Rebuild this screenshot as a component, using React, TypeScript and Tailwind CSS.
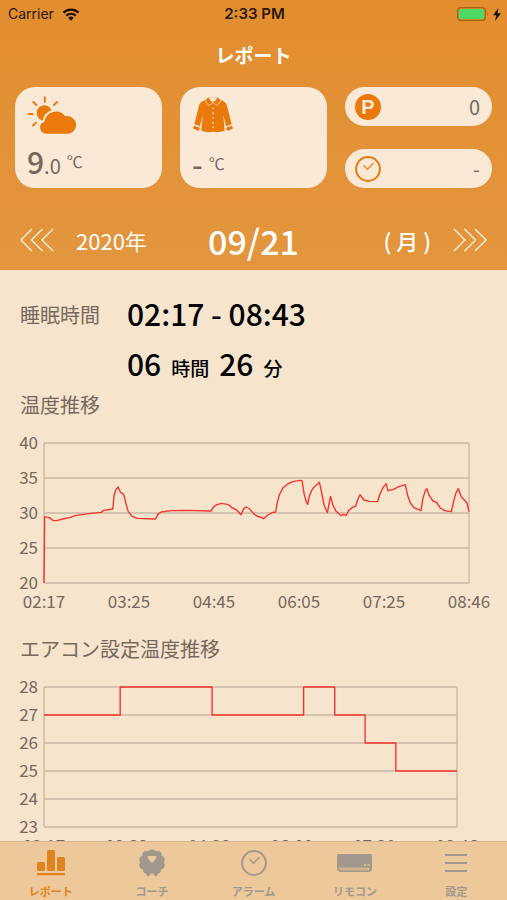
import type { ReactNode } from 'react';
import clsx from 'clsx';

const TEMPERATURE_POINTS =
  '0,420 2,221 16,224 28,233 38,233 56,228 76,224 96,217 136,212 171,208 179,202 206,198 210,157 216,139 222,132 229,148 239,154 246,184 252,205 264,220 280,226 334,228 341,214 351,207 381,203 426,202 500,204 508,192 518,185 532,181 553,185 563,194 577,201 590,215 599,196 606,192 616,198 628,212 637,219 650,223 658,227 670,216 685,208 694,207 698,182 705,155 715,136 727,125 745,116 768,112 773,113 779,152 785,175 790,184 794,162 802,142 810,131 825,118 832,150 839,187 849,209 853,187 858,160 866,188 875,205 890,218 897,214 905,217 913,202 923,194 934,189 939,171 947,155 958,171 975,175 999,176 1006,154 1015,134 1025,122 1030,143 1045,140 1065,130 1082,125 1090,160 1097,179 1108,194 1129,203 1135,167 1142,143 1147,137 1154,158 1165,174 1176,178 1187,195 1200,203 1220,206 1226,180 1233,152 1241,137 1250,161 1267,180 1273,206';

const AIRCON_POINTS =
  '0,84 228,84 228,0 503,0 503,84 777,84 777,0 870,0 870,84 961,84 961,168 1053,168 1053,252 1236,252';

// 天気アイコン
function WeatherIcon() {
  return (
    <svg viewBox="81 60 147 120" className="h-10 w-[49px]" aria-hidden>
      <g stroke="#ea7a0c" strokeWidth="6" strokeLinecap="round">
        <path d="M134.500 67v13M171 81l-9 9M100 81l9 9M86 117h12M99 152l9-9" />
      </g>
      <circle cx="133" cy="114" r="23" fill="#ea7a0c" />
      <path
        d="M139 176a18.500 18.500 0 0 1-6-36 35 35 0 0 1 63-16 26.500 26.500 0 1 1 2 52z"
        fill="#ea7a0c"
        stroke="#fbe9d7"
        strokeWidth="11"
        paintOrder="stroke"
      />
    </svg>
  );
}

// 服装アイコン
function ShirtIcon() {
  return (
    <svg viewBox="576 60 126 120" className="h-10 w-[42px]" aria-hidden>
      <path
        d="M618 74Q600 78 597 92L583 148L600 154L608 120L604 167Q622 174 639 170Q656 174 674 167L670 120L678 154L695 148L681 92Q678 78 660 74L639 84z"
        fill="#ea7a0c"
      />
      <path d="M582 152l18 6-3 9q-9 0-18-7zM696 152l-18 6 3 9q9 0 18-7z" fill="#ea7a0c" />
      <path
        d="M623 67h32l8 10-12 15-12-10-12 10-12-15z"
        fill="#ea7a0c"
        stroke="#fbe9d7"
        strokeWidth="2"
      />
      <path d="M627 68h24l-4 9-8 4-8-4z" fill="#fbe9d7" />
      <g fill="#fbe9d7">
        <circle cx="639" cy="100" r="2.500" />
        <circle cx="639" cy="115" r="2.500" />
        <circle cx="639" cy="129" r="2.500" />
        <circle cx="639" cy="143" r="2.500" />
        <circle cx="639" cy="157" r="2.500" />
      </g>
    </svg>
  );
}

function ClockIcon({ className, handClassName }: { className?: string; handClassName?: string }) {
  return (
    <svg viewBox="0 0 26 26" className={className} fill="none" stroke="currentColor" aria-hidden>
      <circle cx="13" cy="13" r="11.900" strokeWidth="2" />
      <path d="M8.700 9.300l3.800 4L18.500 7" strokeWidth="1.500" className={handClassName} />
    </svg>
  );
}

function TripleChevron({ direction }: { direction: 'left' | 'right' }) {
  return (
    <svg
      viewBox="0 0 34 24"
      className="h-6 w-[34px]"
      fill="none"
      stroke="#fff3e4"
      strokeWidth="1.300"
      aria-hidden
    >
      {direction === 'left' ? (
        <path d="M12 1L1 12l11 11M22.500 1l-11 11 11 11M33 1L22 12l11 11" />
      ) : (
        <path d="M1 1l11 11L1 23M11.500 1l11 11-11 11M22 1l11 11-11 11" />
      )}
    </svg>
  );
}

function StatusBar() {
  return (
    <div className="flex h-7 items-center pr-[6px] pl-2 font-['Inter',sans-serif] text-sm text-[#2a1706]">
      <div className="flex flex-1 items-center gap-2">
        <span>Carrier</span>
        <svg viewBox="0 0 18 13" className="h-[13px] w-[18px]" fill="none" aria-hidden>
          <path d="M1.500 4.700a10.700 10.700 0 0 1 15 0" stroke="#1c0f02" strokeWidth="2.400" />
          <path d="M4.300 7.700a6.700 6.700 0 0 1 9.400 0" stroke="#1c0f02" strokeWidth="2.200" />
          <path d="M9 12.700L6.300 9.900a3.900 3.900 0 0 1 5.400 0z" fill="#1c0f02" />
        </svg>
      </div>
      <span className="text-[15px] font-semibold">2:33 PM</span>
      <div className="flex flex-1 items-center justify-end gap-1">
        <svg viewBox="0 0 32 14" className="h-[14px] w-8" aria-hidden>
          <rect x="0.700" y="0.700" width="27.600" height="12.600" rx="3" fill="none" stroke="#a5631a" strokeWidth="1.300" />
          <rect x="2" y="2" width="25" height="10" rx="1.500" fill="#4cd964" />
          <path d="M30 4.500q1.700 2.500 0 5z" fill="#a5631a" />
        </svg>
        <svg viewBox="0 0 8 13" className="h-[13px] w-2" aria-hidden>
          <path d="M5.500 0L0 7.300h3.300L2 13l6-7.700H4.600z" fill="#1c0f02" />
        </svg>
      </div>
    </div>
  );
}

// 折れ線グラフ
function LineChart({
  yLabels,
  xLabels,
  points,
  width,
  className,
  title,
}: {
  yLabels: number[];
  xLabels: string[];
  points: string;
  width: number;
  className?: string;
  title: string;
}) {
  const step = 420 / (yLabels.length - 1);

  return (
    <div className={clsx('mt-[14px] text-[17px] text-[#75695d]', className)}>
      <div className="flex h-[156px] gap-[6px]">
        <div className="flex w-[38px] flex-col justify-between text-right leading-4">
          {yLabels.map((label) => (
            <span key={label}>{label}</span>
          ))}
        </div>
        <svg
          viewBox={`0 0 ${width} 420`}
          preserveAspectRatio="none"
          className="mt-[9px] h-[140px] min-w-0 flex-1 overflow-visible"
          fill="none"
          role="img"
          aria-label={title}
        >
          <g stroke="#cbb9a4" strokeWidth="1.400">
            {yLabels.map((label, i) => (
              <path key={label} d={`M0 ${i * step}H${width}`} vectorEffect="non-scaling-stroke" />
            ))}
            <path d={`M0 0V420M${width} 0V420`} vectorEffect="non-scaling-stroke" />
          </g>
          <polyline
            points={points}
            stroke="#f5362f"
            strokeWidth="1.400"
            strokeLinejoin="round"
            vectorEffect="non-scaling-stroke"
          />
        </svg>
      </div>
      {/* 目盛りの真下に中央揃えで並べる */}
      <div className="mt-px -mr-[25px] ml-[19px] flex justify-between leading-5">
        {xLabels.map((label) => (
          <span key={label} className="w-[50px] text-center">
            {label}
          </span>
        ))}
      </div>
    </div>
  );
}

function TabItem({ label, active, children }: { label: string; active?: boolean; children: ReactNode }) {
  return (
    <a
      href="#"
      aria-current={active ? 'page' : undefined}
      className={clsx(
        'flex flex-1 flex-col items-center pt-[7px] text-[11px] font-bold leading-4',
        active ? 'text-[#df8320]' : 'text-[#a2988e]'
      )}
    >
      <span className="mb-[6px] flex h-7 items-center">{children}</span>
      {label}
    </a>
  );
}

function TabBar() {
  return (
    <nav className="flex h-[59px] shrink-0 border-t border-[#d8b78d] bg-[#ecc89b]">
      <TabItem label="レポート" active>
        <svg viewBox="0 0 28 26" className="h-[26px] w-7" fill="currentColor" aria-hidden>
          <rect x="0" y="12" width="8" height="9" rx="1.500" />
          <rect x="10" y="0" width="8" height="21" rx="1.500" />
          <rect x="20" y="7" width="8" height="14" rx="1.500" />
          <rect x="0" y="23" width="28" height="2.300" rx="0.500" />
        </svg>
      </TabItem>
      <TabItem label="コーチ">
        <svg viewBox="0 0 26 28" className="h-7 w-[26px]" fill="currentColor" aria-hidden>
          <circle cx="13" cy="13" r="11.800" />
          <circle cx="13" cy="4" r="3.500" />
          <circle cx="7" cy="5.600" r="3.500" />
          <circle cx="19" cy="5.600" r="3.500" />
          <circle cx="3.800" cy="10.500" r="3.500" />
          <circle cx="22.200" cy="10.500" r="3.500" />
          <circle cx="3.800" cy="16.500" r="3.500" />
          <circle cx="22.200" cy="16.500" r="3.500" />
          <circle cx="7.500" cy="21" r="3.500" />
          <circle cx="18.500" cy="21" r="3.500" />
          <path d="M6.500 22h4.500v4.500q-2.500 1.500-3.500 0zM15 22h4.500l-1 4.500q-1 1.500-3.500 0z" />
          <path d="M8.300 7.300q4.700-1.200 9.400 0 .6 1-4.700 6.700-5.300-5.700-4.700-6.700z" fill="#ecc89b" />
        </svg>
      </TabItem>
      <TabItem label="アラーム">
        <ClockIcon className="size-[26px]" />
      </TabItem>
      <TabItem label="リモコン">
        <svg viewBox="0 0 35 18" className="h-[18px] w-[35px]" aria-hidden>
          <path d="M1.500 0h32Q35 0 35 1.500V14q0 4-4 4H4q-4 0-4-4V1.500Q0 0 1.500 0z" fill="currentColor" />
          <path d="M1 13.500h30.500v3H4.500Q2 16.500 1 13.500z" fill="#d0b08c" />
          <path d="M27 11h2M30.500 11h2M31.500 14v2" stroke="#ecc89b" strokeWidth="1.300" />
        </svg>
      </TabItem>
      <TabItem label="設定">
        <svg viewBox="0 0 22 20" className="h-5 w-[22px]" stroke="currentColor" strokeWidth="1.800" aria-hidden>
          <path d="M0 2h22M0 10h22M0 18h22" />
        </svg>
      </TabItem>
    </nav>
  );
}

export default function App() {
  return (
    <div className="flex h-screen flex-col bg-[#f6e4cd] font-['Noto_Sans_CJK_JP',sans-serif]">
      <header className="shrink-0 bg-linear-to-b from-[#e28d2e] to-[#e3963e]">
        <StatusBar />
        <h1 className="flex h-[54px] items-center justify-center text-[19px] font-bold text-white">
          レポート
        </h1>

        <div className="mt-[5px] grid grid-cols-3 gap-[18px] px-[15px] text-[#75695d]">
          <div className="h-[101px] rounded-[20px] bg-[#fbe9d7] px-3 pt-2">
            <WeatherIcon />
            <div className="flex h-[52px] items-center gap-[6px]">
              <p className="text-[30px] font-medium">
                9<span className="text-xl font-normal">.0</span>
              </p>
              <span className="text-base">℃</span>
            </div>
          </div>
          <div className="h-[101px] rounded-[20px] bg-[#fbe9d7] px-3 pt-2">
            <ShirtIcon />
            <div className="flex h-14 items-center gap-[6px]">
              <p className="text-[30px] font-medium">-</p>
              <span className="text-base">℃</span>
            </div>
          </div>
          <div className="flex flex-col justify-between">
            <div className="flex h-[39px] items-center justify-between rounded-full bg-[#fbe9d7] pr-3 pl-[10px]">
              <span className="flex size-[26px] items-center justify-center rounded-full bg-[#ea7a0c] font-['Liberation_Sans',sans-serif] text-xl font-bold text-[#fbe9d7]">
                P
              </span>
              <span className="text-xl">0</span>
            </div>
            <div className="flex h-[39px] items-center justify-between rounded-full bg-[#fbe9d7] pr-3 pl-[10px]">
              <ClockIcon className="size-[26px] text-[#ea7a0c]" handClassName="text-[#ea8f38]" />
              <span className="text-xl">-</span>
            </div>
          </div>
        </div>

        <div className="mt-[22px] grid h-[60px] grid-cols-[1fr_auto_1fr] items-center px-5 text-[22px] text-white">
          <div className="flex items-center gap-[22px]">
            <button type="button" aria-label="前の日">
              <TripleChevron direction="left" />
            </button>
            <span>2020年</span>
          </div>
          <span className="text-[34px] font-medium">09/21</span>
          <div className="flex items-center justify-end gap-[22px]">
            <span className="font-medium">( 月 )</span>
            <button type="button" aria-label="次の日">
              <TripleChevron direction="right" />
            </button>
          </div>
        </div>
      </header>

      <main className="min-h-0 flex-1 overflow-y-auto pt-[21px] pb-6 [scrollbar-width:none]">
        <section className="grid grid-cols-[107px_1fr] pl-5 text-black">
          <h2 className="flex h-12 items-center text-[20px] text-[#75695d]">睡眠時間</h2>
          <div>
            <p className="flex h-11 items-center text-[30px] font-medium">02:17 - 08:43</p>
            <p className="mt-2 flex h-10 items-baseline gap-[10px] text-[30px] leading-10 font-medium">
              06
              <span className="text-[19px]">時間</span>
              26
              <span className="text-[19px]">分</span>
            </p>
          </div>
        </section>

        <section>
          <h2 className="mt-[7px] px-5 text-[20px] leading-[30px] text-[#75695d]">温度推移</h2>
          <LineChart
            title="温度推移"
            className="mr-[38px]"
            width={1273}
            yLabels={[40, 35, 30, 25, 20]}
            xLabels={['02:17', '03:25', '04:45', '06:05', '07:25', '08:46']}
            points={TEMPERATURE_POINTS}
          />
        </section>

        <section>
          <h2 className="mt-[23px] px-5 text-[20px] leading-[30px] text-[#75695d]">
            エアコン設定温度推移
          </h2>
          <LineChart
            title="エアコン設定温度推移"
            className="mr-[50px]"
            width={1236}
            yLabels={[28, 27, 26, 25, 24, 23]}
            xLabels={['02:17', '03:33', '04:38', '06:00', '07:20', '08:46']}
            points={AIRCON_POINTS}
          />
        </section>
      </main>

      <TabBar />
    </div>
  );
}
